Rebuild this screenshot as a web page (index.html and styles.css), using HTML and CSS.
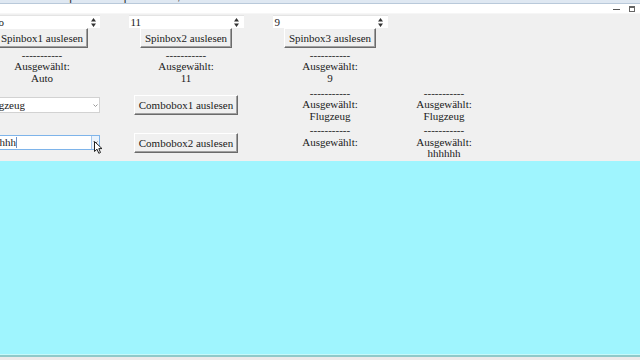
FILE: index.html
```html
<!DOCTYPE html>
<html lang="de">
<head>
  <meta charset="UTF-8">
  <title>Spinbox und Combobox</title>
  <link rel="stylesheet" href="styles.css">
</head>
<body>
  <div id="titleBar">
    <span class="titleText">Beispiel: Spinbox, Combobox und Canvas mit tkinter</span>
  </div>
  <div id="menuStrip">
    <span class="winBtn minBtn"></span>
    <span class="winBtn maxBtn"></span>
  </div>

  <div id="form">
    <!-- row 1: spinboxes -->
    <div class="spinbox first"><span class="val">Auto</span><span class="arrows"><svg width="5" height="9" viewBox="0 0 5 9"><path d="M2.5 0 L5 3.5 L0 3.5 Z M2.5 9 L5 5.5 L0 5.5 Z" fill="#333"/></svg></span></div>
    <div class="spinbox"><span class="val">11</span><span class="arrows"><svg width="5" height="9" viewBox="0 0 5 9"><path d="M2.5 0 L5 3.5 L0 3.5 Z M2.5 9 L5 5.5 L0 5.5 Z" fill="#333"/></svg></span></div>
    <div class="spinbox"><span class="val">9</span><span class="arrows"><svg width="5" height="9" viewBox="0 0 5 9"><path d="M2.5 0 L5 3.5 L0 3.5 Z M2.5 9 L5 5.5 L0 5.5 Z" fill="#333"/></svg></span></div>
    <div></div>

    <!-- row 2: spinbox buttons -->
    <button class="tkBtn">Spinbox1 auslesen</button>
    <button class="tkBtn">Spinbox2 auslesen</button>
    <button class="tkBtn">Spinbox3 auslesen</button>
    <div></div>

    <!-- row 3: spinbox results -->
    <div class="result">-----------<br>Ausgewählt:<br>Auto</div>
    <div class="result">-----------<br>Ausgewählt:<br>11</div>
    <div class="result">-----------<br>Ausgewählt:<br>9</div>
    <div></div>

    <!-- row 4: combobox 1 -->
    <div class="combo"><span class="val">Flugzeug</span><span class="drop"><svg width="5" height="3" viewBox="0 0 5 3"><path d="M0.5 0.5 L2.5 2.5 L4.5 0.5" stroke="#999" fill="none"/></svg></span></div>
    <button class="tkBtn">Combobox1 auslesen</button>
    <div class="result">-----------<br>Ausgewählt:<br>Flugzeug</div>
    <div class="result">-----------<br>Ausgewählt:<br>Flugzeug</div>

    <!-- row 5: combobox 2 -->
    <div class="combo focused"><span class="val">hhhhhh</span><span class="caret"></span><span class="drop hover"><svg width="5" height="3" viewBox="0 0 5 3"><path d="M0.5 0.5 L2.5 2.5 L4.5 0.5" stroke="#777" fill="none"/></svg></span>
      <svg class="mouse" width="9" height="13" viewBox="0 0 9 13"><path d="M0.5 0.5 L0.5 10.5 L3 8.2 L4.8 12.3 L6.5 11.5 L4.8 7.6 L8 7.6 Z" fill="#fff" stroke="#222" stroke-width="1"/></svg>
    </div>
    <button class="tkBtn">Combobox2 auslesen</button>
    <div class="result">-----------<br>Ausgewählt:<br>&nbsp;</div>
    <div class="result">-----------<br>Ausgewählt:<br>hhhhhh</div>
  </div>

  <div id="canvas"></div>
  <div id="bottomEdge"></div>
</body>
</html>
```

FILE: styles.css
```css
html, body {
  margin: 0;
  padding: 0;
  width: 640px;
  height: 360px;
  overflow: hidden;
  background: #eeeaea;
  font-family: 'Liberation Serif', 'Times New Roman', serif;
  font-size: 11px;
  color: #1a1a1a;
}

#titleBar {
  height: 3px;
  overflow: hidden;
  background: #dfe8f2;
  border-bottom: 1px solid #b9c9da;
  padding-left: 34px;
}

.titleText {
  display: block;
  margin-top: -10px;
  font-family: 'Liberation Sans', Arial, sans-serif;
  font-size: 12px;
  line-height: 12px;
  letter-spacing: 3px;
  color: #333;
}

#menuStrip {
  height: 9px;
  background: #ffffff;
  display: flex;
  justify-content: flex-end;
  align-items: center;
  gap: 9px;
  padding-right: 5px;
  border-bottom: 1px solid #f6f6f6;
}

.winBtn {
  display: block;
}

.minBtn {
  width: 7px;
  height: 1px;
  background: #555;
  margin-top: 1px;
}

.maxBtn {
  width: 4px;
  height: 3px;
  border: 1px solid #666;
  border-top-width: 2px;
}

#form {
  height: 147px;
  background: #f0f0f0;
  margin-left: -30px;
  display: grid;
  grid-template-columns: 144px 144px 144px 84px;
  grid-template-rows: 14px 20px 38px 38px 37px;
  justify-items: center;
  align-items: center;
}

.spinbox, .combo {
  position: relative;
  width: 115px;
  height: 13px;
  background: #fff;
  box-sizing: border-box;
  display: flex;
  align-items: center;
  line-height: 11px;
}

.spinbox {
  align-self: end;
  border-top: 1px solid #e4e4e4;
}

.spinbox.first {
  width: 120px;
  margin-left: -4px;
}

.spinbox .val, .combo .val {
  flex: 1;
  padding-left: 2px;
  white-space: nowrap;
  overflow: hidden;
}

.arrows {
  width: 8px;
  display: flex;
  justify-content: center;
  padding-right: 3px;
}

.combo {
  width: 119px;
  height: 16px;
  border: 1px solid #d2d2d2;
  margin-left: -3px;
}

.combo .val {
  flex: none;
}

.combo.focused {
  border-color: #7eb4ea;
  height: 15px;
}

.combo.focused .val {
  padding-left: 1px;
}

.caret {
  width: 1px;
  height: 11px;
  background: #6a8fc8;
  flex: none;
}

.drop {
  margin-left: auto;
  width: 7px;
  height: 100%;
  display: flex;
  align-items: center;
  justify-content: center;
  box-sizing: border-box;
}

.drop.hover {
  border-left: 1px solid #a6c8ec;
  background: #eaf3fc;
  width: 8px;
}

.mouse {
  position: absolute;
  right: -4px;
  top: 5px;
}

.tkBtn {
  font-family: 'Liberation Serif', 'Times New Roman', serif;
  font-size: 11px;
  color: #1a1a1a;
  height: 20px;
  padding: 0 4px;
  background: #f0f0f0;
  border: 1px solid;
  border-color: #ffffff #6b6b6b #6b6b6b #ffffff;
  box-shadow: inset -1px -1px 0 #a0a0a0;
  border-radius: 0;
}

.result {
  text-align: center;
  line-height: 11.5px;
  white-space: nowrap;
}

#canvas {
  height: 193px;
  background: #9ff5fe;
  border-bottom: 1px solid #c6fafb;
}

#bottomEdge {
  height: 2px;
  background: #8fcaca;
}
```
